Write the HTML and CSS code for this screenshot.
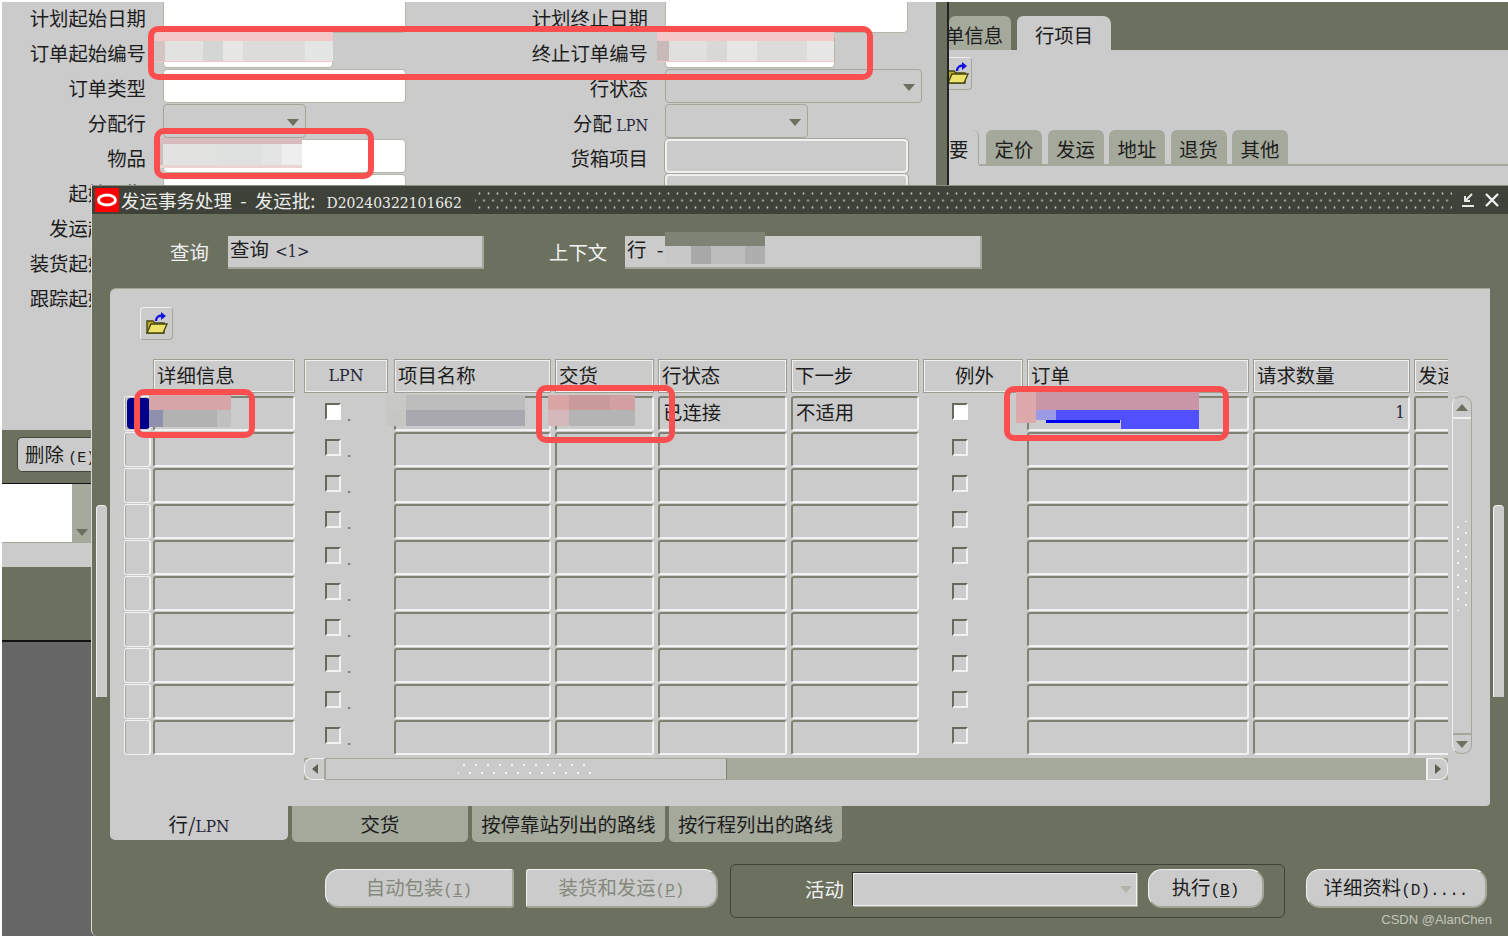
FILE: index.html
```html
<!DOCTYPE html>
<html lang="zh-CN">
<head>
<meta charset="utf-8">
<title>发运事务处理</title>
<link rel="stylesheet" href="styles.css">
</head>
<body>
<div class="desktop">

  <section class="backwin">
    <div class="back-left">
      <div class="form">
        <label class="lbl">计划起始日期</label><div class="fld w243"></div><label class="lbl">计划终止日期</label><div class="fld w243"></div>
        <label class="lbl">订单起始编号</label><div class="fld w170"></div><label class="lbl">终止订单编号</label><div class="fld w170"></div>
        <label class="lbl">订单类型</label><div class="fld w243"></div><label class="lbl">行状态</label><div class="sel w257"></div>
        <label class="lbl">分配行</label><div class="sel w143"></div><label class="lbl">分配 <span class="serif">LPN</span></label><div class="sel w143"></div>
        <label class="lbl">物品</label><div class="fld w243"></div><label class="lbl">货箱项目</label><div class="ro w243"></div>
        <label class="lbl">起始日期</label><div class="fld w243"></div><label class="lbl"></label><div class="ro w243"></div>
        <label class="lbl">发运起始日</label><div></div><label class="lbl"></label><div></div>
        <label class="lbl">装货起始日期</label><div></div><label class="lbl"></label><div></div>
        <label class="lbl">跟踪起始日期</label><div></div><label class="lbl"></label><div></div>
      </div>
      <div class="band"><button class="btn-del">删除 <span class="mono">(E)</span></button></div>
      <div class="listbox"><div class="list-white"></div><div class="list-scroll"><i class="arr-down"></i></div></div>
      <div class="greyband"></div>
      <div class="band2"></div>
      <div class="darkarea"></div>
    </div>
    <div class="divider"></div>
    <div class="back-right">
      <div class="tabs-top">
        <div class="ttab off">单信息</div>
        <div class="ttab on">行项目</div>
      </div>
      <div class="right-panel">
        <div class="iconbtn cut">
          <svg width="26" height="26" viewBox="0 0 26 26"><path d="M3 22V10h6l2 2h9v10z" fill="#b8a820" stroke="#4a4814" stroke-width="1.4"/><path d="M3 22l4-9h16l-4 9z" fill="#ece46a" stroke="#4a4814" stroke-width="1.4"/><path d="M12 10c0-4 3-6 7-5" fill="none" stroke="#1414e0" stroke-width="2.4"/><path d="M17 1l5 4-5 4z" fill="#1414e0"/></svg>
        </div>
        <div class="subtabs">
          <div class="stab act">要</div>
          <div class="stab">定价</div>
          <div class="stab">发运</div>
          <div class="stab">地址</div>
          <div class="stab">退货</div>
          <div class="stab">其他</div>
        </div>
        <div class="subrule"></div>
      </div>
    </div>
  </section>

  <section class="modal">
    <header class="titlebar">
      <span class="logo"><svg width="24" height="24" viewBox="0 0 24 24"><ellipse cx="12" cy="12" rx="8.5" ry="5" fill="none" stroke="#fff" stroke-width="3"/></svg></span>
      <span class="title">发运事务处理 - 发运批: <span class="serif batch">D20240322101662</span></span>
      <span class="dots"></span>
      <svg class="winbtn" width="16" height="18" viewBox="0 0 16 18"><path d="M12 3L5 10M5 5v5h5" fill="none" stroke="#e8e8e8" stroke-width="2"/><path d="M2 15h12" stroke="#e8e8e8" stroke-width="2"/></svg>
      <svg class="winbtn" width="16" height="16" viewBox="0 0 16 16"><path d="M2 2l12 12M14 2L2 14" stroke="#f0f0f0" stroke-width="2.4"/></svg>
    </header>

    <div class="ctx">
      <span class="ctx-l1">查询</span>
      <div class="ctx-f1">查询 <span class="serif">&lt;1&gt;</span></div>
      <span class="ctx-l2">上下文</span>
      <div class="ctx-f2">行 -</div>
    </div>

    <div class="panel">
      <div class="iconbtn tool">
        <svg width="26" height="26" viewBox="0 0 26 26"><path d="M3 22V10h6l2 2h9v10z" fill="#b8a820" stroke="#4a4814" stroke-width="1.4"/><path d="M3 22l4-9h16l-4 9z" fill="#ece46a" stroke="#4a4814" stroke-width="1.4"/><path d="M12 10c0-4 3-6 7-5" fill="none" stroke="#1414e0" stroke-width="2.4"/><path d="M17 1l5 4-5 4z" fill="#1414e0"/></svg>
      </div>
      <div class="tablewrap">
        <div class="table">
          <div></div><div class="h">详细信息</div><div class="h lpn serif">LPN</div><div class="h">项目名称</div><div class="h">交货</div><div class="h">行状态</div><div class="h">下一步</div><div class="h c">例外</div><div class="h">订单</div><div class="h">请求数量</div><div class="h">发运</div>

          <div class="mark"><i class="cur"></i></div><div class="b"></div><div class="ck"><i class="box white"></i><b>.</b></div><div class="b"></div><div class="b"></div><div class="b t">已连接</div><div class="b t">不适用</div><div class="ex"><i class="box white"></i></div><div class="b"></div><div class="b num serif">1</div><div class="b"></div>
          <div class="mark"></div><div class="b"></div><div class="ck"><i class="box"></i><b>.</b></div><div class="b"></div><div class="b"></div><div class="b"></div><div class="b"></div><div class="ex"><i class="box"></i></div><div class="b"></div><div class="b"></div><div class="b"></div>
          <div class="mark"></div><div class="b"></div><div class="ck"><i class="box"></i><b>.</b></div><div class="b"></div><div class="b"></div><div class="b"></div><div class="b"></div><div class="ex"><i class="box"></i></div><div class="b"></div><div class="b"></div><div class="b"></div>
          <div class="mark"></div><div class="b"></div><div class="ck"><i class="box"></i><b>.</b></div><div class="b"></div><div class="b"></div><div class="b"></div><div class="b"></div><div class="ex"><i class="box"></i></div><div class="b"></div><div class="b"></div><div class="b"></div>
          <div class="mark"></div><div class="b"></div><div class="ck"><i class="box"></i><b>.</b></div><div class="b"></div><div class="b"></div><div class="b"></div><div class="b"></div><div class="ex"><i class="box"></i></div><div class="b"></div><div class="b"></div><div class="b"></div>
          <div class="mark"></div><div class="b"></div><div class="ck"><i class="box"></i><b>.</b></div><div class="b"></div><div class="b"></div><div class="b"></div><div class="b"></div><div class="ex"><i class="box"></i></div><div class="b"></div><div class="b"></div><div class="b"></div>
          <div class="mark"></div><div class="b"></div><div class="ck"><i class="box"></i><b>.</b></div><div class="b"></div><div class="b"></div><div class="b"></div><div class="b"></div><div class="ex"><i class="box"></i></div><div class="b"></div><div class="b"></div><div class="b"></div>
          <div class="mark"></div><div class="b"></div><div class="ck"><i class="box"></i><b>.</b></div><div class="b"></div><div class="b"></div><div class="b"></div><div class="b"></div><div class="ex"><i class="box"></i></div><div class="b"></div><div class="b"></div><div class="b"></div>
          <div class="mark"></div><div class="b"></div><div class="ck"><i class="box"></i><b>.</b></div><div class="b"></div><div class="b"></div><div class="b"></div><div class="b"></div><div class="ex"><i class="box"></i></div><div class="b"></div><div class="b"></div><div class="b"></div>
          <div class="mark"></div><div class="b"></div><div class="ck"><i class="box"></i><b>.</b></div><div class="b"></div><div class="b"></div><div class="b"></div><div class="b"></div><div class="ex"><i class="box"></i></div><div class="b"></div><div class="b"></div><div class="b"></div>
        </div>
        <div class="vscroll">
          <div class="vbtn top"><i class="arr-up"></i></div>
          <div class="vtrack"><span class="vgrip"></span></div>
          <div class="vbtn bot"><i class="arr-down"></i></div>
        </div>
      </div>
      <div class="hscroll">
        <div class="hbtn"><i class="arr-left"></i></div>
        <div class="hthumb"><span class="hgrip"></span></div>
        <div class="hrest"></div>
        <div class="hbtn right"><i class="arr-right"></i></div>
      </div>
    </div>

    <nav class="tabs-bot">
      <div class="btab on">行/<span class="serif">LPN</span></div>
      <div class="btab w176">交货</div>
      <div class="btab w193">按停靠站列出的路线</div>
      <div class="btab w173">按行程列出的路线</div>
    </nav>

    <div class="actions">
      <button class="btn dis w189">自动包装<span class="mono">(<u>I</u>)</span></button>
      <button class="btn dis w192 gap12">装货和发运<span class="mono">(<u>P</u>)</span></button>
      <div class="group">
        <span class="group-l">活动</span>
        <div class="group-sel"></div>
        <button class="btn w116">执行<span class="mono">(<u>B</u>)</span></button>
      </div>
      <button class="btn w181">详细资料<span class="mono">(D)....</span></button>
    </div>
    <div class="sbar sbar-l"></div>
    <div class="sbar sbar-r"></div>
    <span class="watermark">CSDN @AlanChen</span>
  </section>

  <div class="blur b1"></div>
  <div class="blur b2"></div>
  <div class="blur b3"></div>
  <div class="blur b4"></div>
  <div class="blur b5"></div>
  <div class="blur b6"></div>
  <div class="blur b7"></div>
  <div class="blur b8"></div>
  <div class="blur b8b"></div>

  <div class="hl h1"></div>
  <div class="hl h2"></div>
  <div class="hl h3"></div>
  <div class="hl h4"></div>
  <div class="hl h5"></div>
</div>
</body>
</html>
```

FILE: styles.css
```css
* { box-sizing: border-box; }
html, body { margin: 0; padding: 0; }
body { background: #fff; font-family: "Noto Sans CJK SC", "Liberation Sans", sans-serif; font-size: 19.4px; color: #1c1c1c; overflow: hidden; }
i { display: block; font-style: normal; }
button { font: inherit; padding: 0; }
.mono { font-family: "Liberation Mono", "DejaVu Sans Mono", monospace; }
.serif { font-family: "DejaVu Serif Condensed", "Liberation Serif", serif; }

.desktop { position: relative; width: 1508px; height: 936px; overflow: hidden; }

/* back window */
.backwin { position: absolute; left: 2px; top: 2px; width: 1506px; height: 934px; display: flex; background: #cbcbcb; overflow: hidden; }
.back-left { width: 934px; display: flex; flex-direction: column; }
.form { height: 428px; margin-top: -3px; flex: none; display: grid; grid-template-columns: 144px 260px 243px 256px; grid-auto-rows: 35px; align-items: start; overflow: hidden; }
.form + .band { margin-top: 3px; }
.lbl { display: block; text-align: right; line-height: 38px; white-space: nowrap; padding-right: 0; }
.lbl .serif { font-size: 16px; color: #26263a; }
.form > .fld, .form > .sel, .form > .ro { margin-left: 17px; }
.form > .lbl:nth-child(4n+3) { width: 242px; }
.form > :nth-child(4n) { margin-left: 16px; }
.fld { height: 34px; background: #fff; border: 1px solid #b3b6a8; border-radius: 4px; }
.sel { position: relative; height: 34px; background: #cbcbcb; border: 1px solid #a3a698; border-radius: 4px; }
.sel::after { content: ""; position: absolute; right: 6px; top: 14px; border: 6px solid transparent; border-top: 7px solid #6b705f; border-bottom: 0; }
.ro { height: 34px; background: #cbcbcb; border: 2px solid #f0f0f0; border-radius: 4px; box-shadow: 0 0 0 1px #a3a698; }
.w243 { width: 243px; }
.w170 { width: 170px; }
.w257 { width: 257px; }
.w143 { width: 143px; }
.band { height: 53px; flex: none; background: #6b705f; padding: 7px 0 0 15px; }
.btn-del { display: block; width: 90px; height: 35px; background: #cbcbcb; border: 1px solid #44483c; border-radius: 5px; text-align: left; padding: 0 0 3px 7px; font-size: 19.4px; color: #1c1c1c; white-space: nowrap; }
.btn-del .mono { font-size: 15px; }
.listbox { height: 60px; flex: none; border-top: 1px solid #111; display: flex; }
.list-white { width: 70px; background: #fff; border-bottom: 1px solid #a5a99b; }
.list-scroll { flex: 1; background: #a5a99b; position: relative; }
.list-scroll .arr-down { position: absolute; left: 4px; bottom: 7px; }
.greyband { height: 24px; flex: none; background: #cbcbcb; }
.band2 { height: 75px; flex: none; background: #6b705f; border-bottom: 2px solid #111; }
.darkarea { flex: 1; background: #666; }
.divider { width: 13px; flex: none; background: #6b705f; border-right: 2px solid #222; }
.back-right { flex: 1; display: flex; flex-direction: column; }
.tabs-top { height: 48px; flex: none; background: #6b705f; padding-top: 14px; display: flex; gap: 6px; }
.ttab { height: 34px; border-radius: 6px 6px 0 0; line-height: 38px; text-align: center; }
.ttab.off { width: 62px; background: #a5a99b; text-indent: -12px; overflow: hidden; white-space: nowrap; margin-bottom: 0; }
.ttab.on { width: 94px; background: #cbcbcb; border-radius: 6px 8px 0 0; }
.right-panel { flex: 1; background: #cbcbcb; display: flex; flex-direction: column; }
.iconbtn { width: 33px; height: 33px; background: #cbcbcb; border: 1px solid #a3a698; border-top-color: #f0f0f0; border-left-color: #f0f0f0; border-radius: 4px; display: flex; align-items: center; justify-content: center; }
.iconbtn.cut { width: 23px; margin-top: 7px; border-radius: 0 4px 4px 0; border-left: 0; overflow: hidden; justify-content: flex-end; }
.iconbtn.cut svg { flex: none; margin-right: 0; }
.subtabs { display: flex; gap: 5.5px; margin-top: 40px; height: 34px; flex: none; }
.stab { width: 56px; background: #a5a99b; border-radius: 6px 6px 0 0; text-align: center; line-height: 37px; }
.stab.act { width: 30px; background: #cbcbcb; margin-right: 1.5px; text-align: left; border-right: 1px solid #a5a99b; border-radius: 0 6px 0 0; overflow: hidden; }
.subrule { height: 2px; background: #a5a99b; margin-left: 30px; }

/* modal */
.modal { position: absolute; left: 91px; top: 185px; width: 1417px; height: 751px; background: #6b705f; border-left: 1px solid #d8d8d8; border-radius: 0 0 0 6px; display: flex; flex-direction: column; }
.titlebar { height: 29px; flex: none; background: #3f4238; border-top: 1px solid #8b8e80; display: flex; align-items: center; padding-left: 3px; color: #ececec; }
.logo { width: 24px; height: 24px; background: #f00; flex: none; display: block; }
.logo svg { display: block; }
.title { margin-left: 2px; font-size: 18.5px; white-space: nowrap; word-spacing: 4px; }
.batch { font-size: 15.5px; margin-left: 3px; }
.dots { flex: 1; height: 20px; margin: 0 8px 0 13px; background-image: radial-gradient(circle, #c9ccbe 0.9px, transparent 1.2px), radial-gradient(circle, #c9ccbe 0.9px, transparent 1.2px); background-size: 9px 14px; background-position: 0 -3.5px, 4.5px 3.5px; }
.winbtn { flex: none; margin-right: 8px; }
.ctx { height: 74px; flex: none; position: relative; display: flex; color: #f2f2f2; }
.ctx-l1 { margin: 25px 0 0 78px; line-height: 26px; width: 58px; }
.ctx-f1 { margin-top: 22px; width: 256px; height: 33px; background: #cbcbcb; border-bottom: 2px solid #a3a698; border-right: 2px solid #a3a698; color: #1c1c1c; padding-left: 2px; line-height: 26px; white-space: nowrap; }
.ctx-f1 .serif { font-size: 16.5px; margin-left: 2px; color: #2a2a3a; }
.ctx-l2 { margin: 25px 0 0 65px; line-height: 26px; width: 76px; }
.ctx-f2 { margin-top: 22px; width: 357px; height: 33px; background: #cbcbcb; border-bottom: 2px solid #a3a698; border-right: 2px solid #a3a698; color: #1c1c1c; padding-left: 2px; line-height: 26px; word-spacing: 6px; }
.panel { margin: 0 18px 0 18px; height: 518px; flex: none; background: #cbcbcb; border-radius: 6px 0 4px 0; border-top: 1px solid #a3a698; padding: 18px 0 0 14px; }
.iconbtn.tool { margin-left: 16px; }
.tablewrap { display: flex; gap: 4px; margin-top: 19px; }
.table { width: 1324px; overflow: hidden; display: grid; grid-template-columns: 28px 146px 95px 161px 103px 133px 132px 104px 226px 161px 47px; grid-template-rows: 37px repeat(10, 36px); flex: none; }
.h { height: 34px; margin: 0 3px 0 1px; border: 1px solid #9a9d8f; box-shadow: inset 1px 1px 0 #f0f0f0, inset -1px -1px 0 #f0f0f0; padding-left: 3px; line-height: 29px; white-space: nowrap; overflow: hidden; }
.h.c { text-align: center; }
.h.lpn { margin: 0 5px 0 6px; text-align: center; padding: 0; font-size: 17.5px; line-height: 31px; color: #26263a; }
.b { height: 35px; margin: 0 3px 0 1px; border: 2px solid; border-color: #7f8373 #f2f2f2 #f2f2f2 #7f8373; border-radius: 3px; }
.b.t { padding-left: 3px; line-height: 27px; white-space: nowrap; }
.b.num { text-align: right; padding-right: 3px; line-height: 28px; font-size: 17px; color: #26263a; }
.mark { height: 35px; width: 27px; position: relative; border: 1px solid #f2f2f2; border-right-width: 2px; border-radius: 3px; box-shadow: inset 1px 0 0 #a3a698; }
.cur { position: absolute; left: 2px; top: 1px; width: 23px; height: 31px; background: #00008b; border-radius: 4px; }
.ck { display: flex; align-items: flex-start; padding: 7px 0 0 27px; }
.ck b { font-weight: 400; font-size: 15px; line-height: 24px; margin-left: 6px; color: #666; }
.ex { padding: 7px 0 0 30px; }
.box { width: 16px; height: 17px; border: 2px solid; border-color: #66695c #f2f2f2 #f2f2f2 #66695c; }
.box.white { background: #fff; border-color: #66695c #fff #fff #66695c; }
.vscroll { width: 20px; height: 358px; margin-top: 37px; flex: none; background: #cbcbcb; border: 1px solid #a3a698; border-radius: 9px; border-left-color: #f0f0f0; display: flex; flex-direction: column; }
.vbtn { height: 22px; flex: none; display: flex; align-items: center; justify-content: center; }
.vbtn.top { border-bottom: 2px solid #f0f0f0; }
.vbtn.bot { border-top: 2px solid #a3a698; height: 20px; }
.vtrack { flex: 1; padding-top: 102px; display: flex; justify-content: center; }
.vgrip { display: block; width: 16px; height: 90px; background-image: radial-gradient(circle, #f4f4f4 1px, transparent 1.4px), radial-gradient(circle, #f4f4f4 1px, transparent 1.4px); background-size: 16px 12px; background-position: -4px 0, 4px 6px; }
.arr-up { width: 0; height: 0; border: 6px solid transparent; border-bottom: 7px solid #6b705f; border-top: 0; }
.arr-down { width: 0; height: 0; border: 6px solid transparent; border-top: 7px solid #6b705f; border-bottom: 0; }
.arr-left { width: 0; height: 0; border: 5px solid transparent; border-right: 6px solid #5c6052; border-left: 0; }
.arr-right { width: 0; height: 0; border: 5px solid transparent; border-left: 6px solid #5c6052; border-right: 0; }
.hscroll { display: flex; width: 1144px; height: 22px; margin: 2px 0 0 180px; background: #a5a99b; }
.hbtn { width: 22px; flex: none; background: #cbcbcb; border: 1px solid #f0f0f0; border-right: 2px solid #a3a698; border-radius: 8px 0 0 8px; display: flex; align-items: center; justify-content: center; }
.hbtn.right { border-radius: 0 8px 8px 0; border-right: 1px solid #f0f0f0; border-left: 2px solid #f0f0f0; }
.hthumb { width: 401px; flex: none; background: #cbcbcb; border-top: 1px solid #a5a99b; border-bottom: 1px solid #a5a99b; border-right: 1px solid #7f8373; display: flex; align-items: center; justify-content: center; }
.hgrip { display: block; width: 136px; height: 16px; background-image: radial-gradient(circle, #f4f4f4 1px, transparent 1.4px), radial-gradient(circle, #f4f4f4 1px, transparent 1.4px); background-size: 12px 16px; background-position: 0 -4px, 6px 4px; }
.hrest { flex: 1; background: #a5a99b; }
.tabs-bot { display: flex; margin-left: 18px; gap: 4px; height: 36px; flex: none; }
.btab { background: #a5a99b; border-radius: 0 0 5px 5px; text-align: center; line-height: 36px; white-space: nowrap; }
.btab.on { width: 178px; height: 34px; background: #cbcbcb; line-height: 36px; margin-right: 0; }
.btab.on .serif { font-size: 17px; color: #26263a; }
.w176 { width: 176px; }
.w193 { width: 193px; }
.w173 { width: 173px; }
.actions { display: flex; align-items: flex-start; padding: 22px 0 0 233px; }
.btn { height: 39px; margin-top: 5px; padding-bottom: 3px; background: #cbcbcb; border: 1px solid #f0f0f0; border-right: 2px solid #a3a698; border-bottom: 2px solid #a3a698; border-radius: 14px; color: #1c1c1c; font-size: 19.4px; white-space: nowrap; text-align: center; }
.btn .mono { font-size: 16px; }
.btn.dis { color: #85887d; border-radius: 14px 3px 3px 14px; }
.btn.dis.w192 { border-radius: 3px 14px 14px 3px; }
.w189 { width: 189px; }
.w192 { width: 192px; }
.gap12 { margin-left: 12px; }
.w116 { width: 116px; }
.w181 { width: 181px; margin-left: 21px; }
.group { width: 555px; height: 54px; margin-left: 12px; border: 1px solid #3f4238; border-radius: 6px; display: flex; align-items: flex-start; flex: none; }
.group-l { margin: 11px 0 0 74px; color: #f2f2f2; line-height: 26px; width: 48px; }
.group-sel { position: relative; width: 284px; height: 33px; margin-top: 8px; background: #cbcbcb; border: 1px solid #f0f0f0; box-shadow: -1px -1px 0 #2c2e27, 1px 1px 0 #a3a698; }
.group-sel::after { content: ""; position: absolute; right: 4px; top: 12px; border: 6px solid transparent; border-top: 7px solid #b2b4a9; border-bottom: 0; }
.group .btn { margin: 4px 0 0 11px; }
.sbar { position: absolute; top: 320px; width: 11px; height: 192px; background: #cbcbcb; border-left: 1px solid #f0f0f0; border-top: 1px solid #f0f0f0; border-radius: 4px 4px 0 0; }
.sbar-l { left: 4px; }
.sbar-r { right: 4px; }
.watermark { position: absolute; right: 16px; top: 726px; color: #c4c6bb; font-family: "Liberation Sans", sans-serif; font-size: 13px; line-height: 18px; }

/* pixelated blur patches over sensitive values */
.blur { position: absolute; }
.b1 { left: 155px; top: 32px; width: 178px; height: 30px; background: linear-gradient(#f4c8c8, #f4c8c8) 0 0 / 100% 9px no-repeat, linear-gradient(#f6c6c6, #f6c6c6) 0 100% / 100% 1px no-repeat, linear-gradient(90deg, #d4c4c4 0 10px, #e2e2e0 10px 48px, #d4d6d6 48px 68px, #e6e6e4 68px 88px, #dcdcda 88px 150px, #e4e6e6 150px 100%); }
.b2 { left: 657px; top: 32px; width: 177px; height: 30px; background: linear-gradient(#f4c8c8, #f4c8c8) 0 0 / 100% 9px no-repeat, linear-gradient(#f6c6c6, #f6c6c6) 0 100% / 100% 1px no-repeat, linear-gradient(90deg, #c9baba 0 12px, #e0e0de 12px 50px, #d8d8d6 50px 70px, #e6e6e4 70px 100px, #dcdcda 100px 150px, #e6e6e6 150px 100%); }
.b3 { left: 157px; top: 138px; width: 145px; height: 30px; background: linear-gradient(#d6bcbc, #d6bcbc) 0 0 / 100% 6px no-repeat, linear-gradient(#ecd4d4, #ecd4d4) 0 100% / 100% 3px no-repeat, linear-gradient(90deg, #cdbcbc 0 6px, #e2e2e0 6px 60px, #dfe0e0 60px 105px, #e4e4e4 105px 125px, #eeeeee 125px 100%); }
.b4 { left: 665px; top: 232px; width: 100px; height: 32px; background: linear-gradient(#7f8375, #7f8375) 0 0 / 100% 14px no-repeat, linear-gradient(90deg, #c8c8c8 0 26px, #a8a8a8 26px 46px, #bcbcbc 46px 80px, #aeaeae 80px 100%); }
.b5 { left: 149px; top: 395px; width: 82px; height: 32px; background: linear-gradient(#d6a5a8, #d6a5a8) 0 0 / 100% 15px no-repeat, linear-gradient(90deg, #8f90ad 0 14px, #b2b2b2 14px 68px, #c0c0c0 68px 100%); }
.b6 { left: 386px; top: 395px; width: 139px; height: 31px; background: linear-gradient(90deg, #c8c8c6 0 20px, #bcbcbc 20px 100%) 0 0 / 100% 15px no-repeat, linear-gradient(90deg, #c6c6c2 0 20px, #a8a8ae 20px 100%); }
.b7 { left: 548px; top: 395px; width: 87px; height: 31px; background: linear-gradient(90deg, #d8a4a4 0 21px, #c99a9a 21px 62px, #d2a0a0 62px 100%) 0 0 / 100% 15px no-repeat, linear-gradient(90deg, #d4b8bc 0 21px, #b4b4b4 21px 100%); }
.b8 { left: 1016px; top: 390px; width: 183px; height: 39px; background: linear-gradient(90deg, #dcaaaa 0 20px, transparent 20px) 0 0 / 100% 33px no-repeat, linear-gradient(#c996a8, #c996a8) 20px 0 / 100% 20px no-repeat, linear-gradient(90deg, #9a9ae6 0 20px, #5050ff 20px 100%) 20px 20px / 100% 10px no-repeat, linear-gradient(#5050ff, #5050ff) 105px 30px / 100% 9px no-repeat; }
.b8b { left: 1046px; top: 420px; width: 74px; height: 3px; background: #0000f0; }

/* red annotation rectangles */
.hl { position: absolute; border: 6px solid #fb4f4f; border-radius: 10px; }
.h1 { left: 148px; top: 26px; width: 725px; height: 54px; }
.h2 { left: 154px; top: 128px; width: 220px; height: 51px; }
.h3 { left: 134px; top: 389px; width: 121px; height: 49px; }
.h4 { left: 536px; top: 385px; width: 139px; height: 58px; }
.h5 { left: 1004px; top: 386px; width: 225px; height: 55px; }
```
